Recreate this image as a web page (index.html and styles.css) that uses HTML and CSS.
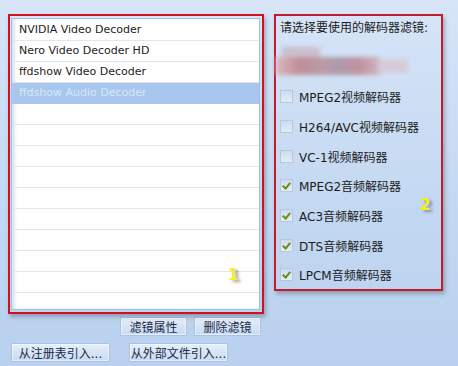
FILE: index.html
```html
<!DOCTYPE html>
<html lang="zh-CN">
<head>
    <meta charset="UTF-8">
    <title>解码器滤镜</title>
    <link rel="stylesheet" href="styles.css">
</head>
<body>
    <div class="page">
        <div class="left">
            <div class="frame frame-list">
                <ul class="list">
                    <li>NVIDIA Video Decoder</li>
                    <li>Nero Video Decoder HD</li>
                    <li>ffdshow Video Decoder</li>
                    <li class="selected">ffdshow Audio Decoder</li>
                    <li></li><li></li><li></li><li></li><li></li>
                    <li></li><li></li><li></li><li></li><li></li>
                </ul>
                <span class="mark mark-1">1</span>
            </div>
            <div class="btn-row btn-row-top">
                <button class="btn btn-small">滤镜属性</button>
                <button class="btn btn-small">删除滤镜</button>
            </div>
            <div class="btn-row btn-row-bottom">
                <button class="btn btn-wide">从注册表引入...</button>
                <button class="btn btn-wide">从外部文件引入...</button>
            </div>
        </div>
        <div class="frame frame-opts">
            <div class="title">请选择要使用的解码器滤镜:</div>
            <div class="blur">
                <span class="b1"></span><span class="b2"></span><span class="b3"></span>
            </div>
            <label class="opt"><span class="box"></span>MPEG2视频解码器</label>
            <label class="opt"><span class="box"></span>H264/AVC视频解码器</label>
            <label class="opt"><span class="box"></span>VC-1视频解码器</label>
            <label class="opt"><span class="box checked"></span>MPEG2音频解码器</label>
            <label class="opt"><span class="box checked"></span>AC3音频解码器</label>
            <label class="opt"><span class="box checked"></span>DTS音频解码器</label>
            <label class="opt"><span class="box checked"></span>LPCM音频解码器</label>
            <span class="mark mark-2">2</span>
        </div>
    </div>
</body>
</html>
```

FILE: styles.css
```css
body {
    margin: 0;
    width: 458px;
    height: 366px;
    overflow: hidden;
    background: linear-gradient(#d7e5f7, #c2d7f1 60%, #b9d1ef);
    font-family: Tahoma, "DejaVu Sans", "Noto Sans CJK SC", sans-serif;
    font-size: 11px;
    color: #1c1c1c;
}
.page {
    display: flex;
    padding: 14px 0 0 8px;
    gap: 10px;
}
.left {
    width: 256px;
}
.frame {
    position: relative;
    box-sizing: border-box;
    border: 2px solid #d0111e;
    box-shadow: 2px 3px 4px rgba(60,60,80,0.35);
}
.frame-list {
    height: 300px;
    padding: 2px 2px 2px 1px;
}
.list {
    list-style: none;
    margin: 0;
    padding: 1px 0 0 0;
    height: 292px;
    overflow: hidden;
    box-sizing: border-box;
    background: #fff;
    border: 1px solid #9ec0e8;
    box-shadow: inset 3px 0 3px rgba(120,150,190,0.25);
}
.list li {
    height: 21px;
    line-height: 20px;
    box-sizing: border-box;
    border-bottom: 1px solid #dfe6f0;
    padding-left: 7px;
}
.list li.selected {
    background: #a7c7ef;
    color: #d8e6f8;
    border-bottom-color: #a7c7ef;
}
.mark {
    position: absolute;
    color: #f2f21a;
    font-weight: bold;
    font-size: 15px;
    font-family: "DejaVu Sans", sans-serif;
    text-shadow: 3px 2px 3px rgba(80,80,80,0.55);
}
.mark-1 {
    left: 218px;
    top: 250px;
}
.mark-2 {
    left: 144px;
    top: 180px;
}
.btn-row {
    display: flex;
}
.btn-row-top {
    margin-top: 3px;
    padding-left: 112px;
    gap: 7px;
}
.btn-row-bottom {
    margin-top: 7px;
    padding-left: 3px;
    gap: 19px;
}
.btn {
    font: inherit;
    font-size: 12px;
    color: #1c2b48;
    height: 19px;
    padding: 0;
    border: 1px solid #a9c3e3;
    border-radius: 1px;
    background: linear-gradient(#e6eefa, #c9dbf2);
    box-shadow: inset 0 0 0 1px rgba(255,255,255,0.5);
}
.btn-small {
    width: 67px;
}
.btn-wide {
    width: 99px;
}
.frame-opts {
    width: 169px;
    height: 277px;
    padding: 5px 0 0 4px;
    border-color: #c21b2b;
}
.title {
    font-size: 12px;
    line-height: 15px;
}
.blur {
    position: relative;
    height: 46px;
    filter: blur(2px);
}
.blur span {
    position: absolute;
    display: block;
}
.b1 {
    left: 2px;
    top: 11px;
    width: 38px;
    height: 12px;
    background: #cbbfcd;
}
.b2 {
    left: -4px;
    top: 21px;
    width: 104px;
    height: 18px;
    background: linear-gradient(90deg, #dcb7bf, #bf8f98 22%, #b99ba6 45%, #ad9aaa 62%, #c2929e 80%, #cdb5c3);
}
.b3 {
    left: 98px;
    top: 23px;
    width: 30px;
    height: 14px;
    background: #d5cbd9;
}
.opt {
    display: flex;
    align-items: center;
    height: 29.7px;
    font-size: 12px;
}
.box {
    box-sizing: border-box;
    width: 13px;
    height: 13px;
    margin-right: 6px;
    border: 1px solid #b5c8de;
    background: linear-gradient(#cfdcef, #e3ebf6);
    position: relative;
}
.box.checked::after {
    content: "";
    position: absolute;
    left: 3px;
    top: 1px;
    width: 3px;
    height: 6px;
    border: solid #6c8a12;
    border-width: 0 2px 2px 0;
    transform: rotate(40deg);
}
```
